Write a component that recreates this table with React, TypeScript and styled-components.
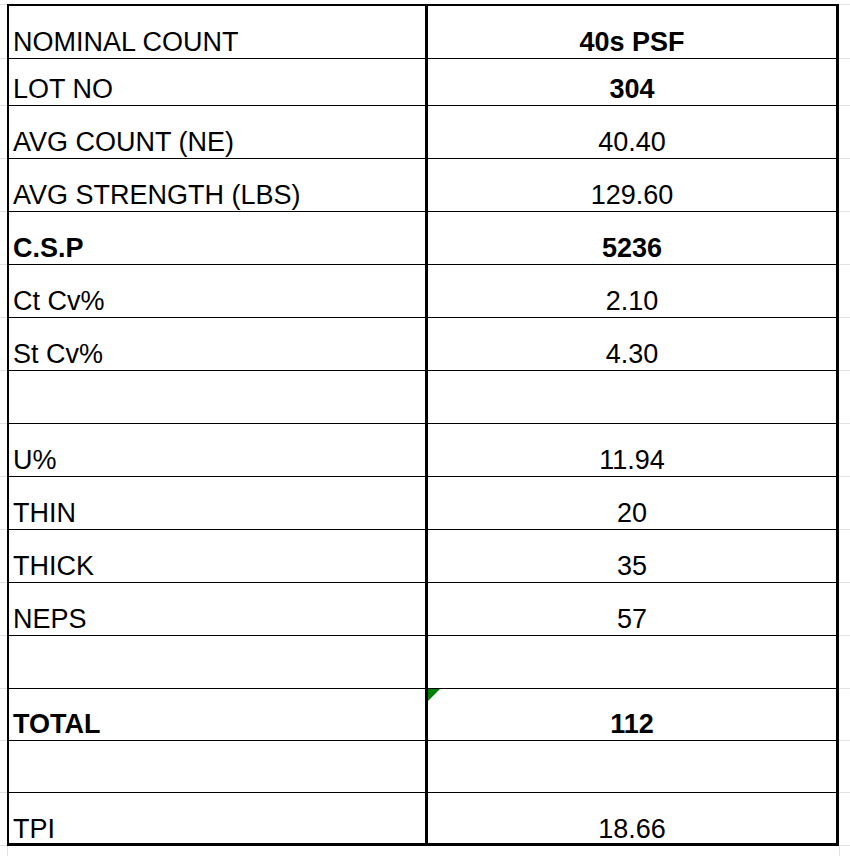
import React from 'react'
import styled, { createGlobalStyle } from 'styled-components'

const GlobalStyle = createGlobalStyle`
    html, body {
        margin: 0;
        padding: 0;
        background: #ffffff;
    }
    body {
        font-family: "Liberation Sans", Arial, sans-serif;
        color: #000000;
    }
`

const GRID = '#e2e2e2'

interface Linha {
    rotulo: string
    valor: string
    altura: number
    rotuloNegrito?: boolean
    valorNegrito?: boolean
    marcador?: boolean
}

const linhas: Linha[] = [
    { rotulo: 'NOMINAL COUNT', valor: '40s PSF', altura: 52, valorNegrito: true },
    { rotulo: 'LOT NO', valor: '304', altura: 46, valorNegrito: true },
    { rotulo: 'AVG COUNT (NE)', valor: '40.40', altura: 52 },
    { rotulo: 'AVG STRENGTH (LBS)', valor: '129.60', altura: 52 },
    { rotulo: 'C.S.P', valor: '5236', altura: 52, rotuloNegrito: true, valorNegrito: true },
    { rotulo: 'Ct Cv%', valor: '2.10', altura: 52 },
    { rotulo: 'St Cv%', valor: '4.30', altura: 52 },
    { rotulo: '', valor: '', altura: 52 },
    { rotulo: 'U%', valor: '11.94', altura: 52 },
    { rotulo: 'THIN', valor: '20', altura: 52 },
    { rotulo: 'THICK', valor: '35', altura: 52 },
    { rotulo: 'NEPS', valor: '57', altura: 52 },
    { rotulo: '', valor: '', altura: 52 },
    { rotulo: 'TOTAL', valor: '112', altura: 51, rotuloNegrito: true, valorNegrito: true, marcador: true },
    { rotulo: '', valor: '', altura: 51 },
    { rotulo: 'TPI', valor: '18.66', altura: 50 },
]

const Pagina = styled.div`
    padding-top: 4px;
    width: 850px;
    display: flex;
    flex-direction: column;
`

const Linha = styled.div`
    display: grid;
    grid-template-columns: 7px 418px 414px 1fr;
`

const Margem = styled.div<{ $primeira: boolean }>`
    border-top: ${p => p.$primeira ? `1px solid ${GRID}` : 'none'};
    border-bottom: 1px solid ${GRID};
`

const Celula = styled.div<{ $altura: number, $primeira: boolean, $ultima: boolean, $negrito?: boolean }>`
    box-sizing: content-box;
    height: ${p => p.$altura}px;
    display: flex;
    align-items: flex-end;
    border-top: ${p => p.$primeira ? '2px solid #000' : 'none'};
    border-bottom: ${p => p.$ultima ? '3px solid #000' : '1px solid #000'};
    font-size: 27px;
    line-height: 1;
    font-weight: ${p => p.$negrito ? 700 : 400};
    white-space: nowrap;
    overflow: hidden;
`

const Texto = styled.span<{ $ultima: boolean }>`
    padding-bottom: ${p => p.$ultima ? 0 : 2}px;
`

const CelulaRotulo = styled(Celula)`
    border-left: 2px solid #000;
    padding-left: 4px;
`

const CelulaValor = styled(Celula)`
    position: relative;
    justify-content: center;
    border-left: 3px solid #000;
    border-right: 3px solid #000;
`

const Marcador = styled.div`
    position: absolute;
    top: 0;
    left: 0;
    width: 12px;
    height: 12px;
    background: #008000;
    clip-path: polygon(0 0, 100% 0, 0 100%);
`

const Rodape = styled.div`
    display: grid;
    grid-template-columns: 7px 418px 414px 1fr;
    height: 12px;
`

const LinhaGrade = styled.div`
    border-left: 1px solid ${GRID};
`

const App = () => {
    const total = linhas.length

    return <>
        <GlobalStyle />
        <Pagina>
            {linhas.map((linha, i) => {
                const primeira = i === 0
                const ultima = i === total - 1
                return <Linha key={i}>
                    <Margem $primeira={primeira} />
                    <CelulaRotulo $altura={linha.altura} $primeira={primeira} $ultima={ultima} $negrito={linha.rotuloNegrito}>
                        <Texto $ultima={ultima}>{linha.rotulo}</Texto>
                    </CelulaRotulo>
                    <CelulaValor $altura={linha.altura} $primeira={primeira} $ultima={ultima} $negrito={linha.valorNegrito}>
                        {linha.marcador && <Marcador />}
                        <Texto $ultima={ultima}>{linha.valor}</Texto>
                    </CelulaValor>
                    <Margem $primeira={primeira} />
                </Linha>
            })}
            <Rodape>
                <div />
                <LinhaGrade />
                <div />
                <LinhaGrade />
            </Rodape>
        </Pagina>
    </>
}

export default App
